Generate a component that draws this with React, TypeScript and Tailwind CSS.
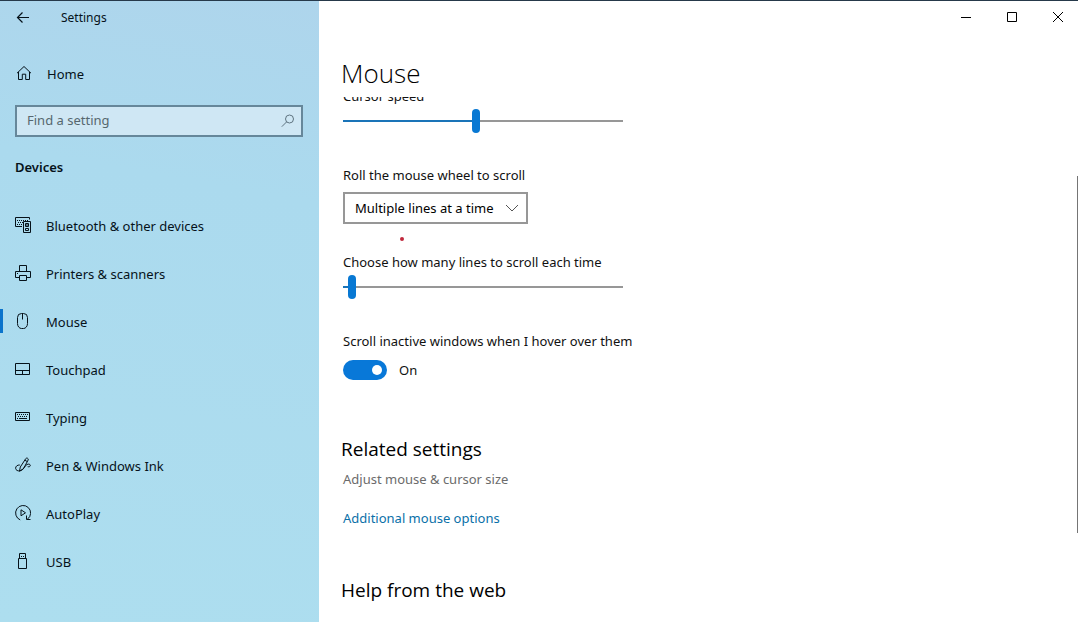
import { useState } from "react";
import type { CSSProperties, ReactNode } from "react";

const ICONS: Record<string, ReactNode> = {
  home: <path d="M1 8.2 8 1.5l7 6.7M2.5 7v7.5h3.8V9.2h3.4v5.3h3.8V7" />,
  bluetooth: (
    <>
      <path d="M7 9.5H.5v-9h14v2" />
      <path d="M2 3.5h11M3 5.5h5M2 7.5h5" strokeDasharray="1 1" />
      <path d="M8.5 4.5h7v11h-7zM10.5 6.5h3v3h-3zM11 8h2M10.5 11.5h3v2h-3z" />
    </>
  ),
  printer: (
    <path d="M4.5 6.5v-6h7v6M4.5 12.5h-4v-6h15v6h-4M4.5 10.5h7v5h-7zM2 8.5h1" />
  ),
  mouse: (
    <path d="M2.5 4.5a4 4 0 0 1 4-4h2a4 4 0 0 1 4 4v6a4 5 0 0 1-4 5h-2a4 5 0 0 1-4-5zM7.5.5v6" />
  ),
  touchpad: <path d="M.5 2.5h14v11H.5zM.5 9.5h14M7.5 9.5v4" />,
  typing: (
    <>
      <path d="M.5 3.5h14v8H.5z" />
      <path d="M2 5.5h11M3 7.5h10M2 9.5h2M11 9.5h2" strokeDasharray="1 1" />
      <path d="M4 9.5h7" />
    </>
  ),
  pen: (
    <path d="M4.5 14.2 5.3 10l5.500-8.400c.8-1.200 3-.2 2.400 1.300L8.400 11.800zM9.800 3.200l2.500 1.400M4.800 8C2.500 7.800.5 9.300.6 11.300c.1 2 2.400 2.900 4.400 2.600 3.500-.5 4.500-5.200 7-6.400 1.700-.8 3.300-.3 3.300 1 0 1-1.100 1.500-2.600 1.200" />
  ),
  autoplay: (
    <>
      <path d="M5.200 14.900A7.500 7.500 0 1 1 12.600 14M15.500 14.500h-4v-4" />
      <path d="M6 4.800v6l4.500-3z" />
    </>
  ),
  usb: <path d="M4.5 5.500v-5h6v5M3.500 5.500h8v10h-8zM6 3.500h1M8 3.500h1" />,
};

const NAV_ITEMS = [
  { icon: "bluetooth", label: "Bluetooth & other devices" },
  { icon: "printer", label: "Printers & scanners" },
  { icon: "mouse", label: "Mouse" },
  { icon: "touchpad", label: "Touchpad" },
  { icon: "typing", label: "Typing" },
  { icon: "pen", label: "Pen & Windows Ink" },
  { icon: "autoplay", label: "AutoPlay" },
  { icon: "usb", label: "USB" },
];

const WINDOW_BUTTONS = [
  { label: "Minimize", path: "M1 6.5h10" },
  { label: "Maximize", path: "M1.5 1.5h9v9h-9z" },
  { label: "Close", path: "m1 1 10 10M11 1 1 11" },
];

function Icon({ name }: { name: string }) {
  return (
    <svg
      viewBox="0 0 16 16"
      className="-mt-0.5 size-4 shrink-0 fill-none stroke-current"
      aria-hidden="true"
    >
      {ICONS[name]}
    </svg>
  );
}

type SliderProps = {
  id: string;
  label: string;
  min: number;
  max: number;
  initial: number;
};

function Slider({ id, label, min, max, initial }: SliderProps) {
  const [value, setValue] = useState(initial);
  const fill = ((value - min) / (max - min)) * 100;

  return (
    <div className="flex flex-col gap-[3px]">
      <label htmlFor={id}>{label}</label>
      <input
        id={id}
        type="range"
        min={min}
        max={max}
        value={value}
        onChange={(e) => setValue(Number(e.target.value))}
        style={{ "--fill": `${fill}%` } as CSSProperties}
        className="h-6 w-full max-w-[280px] appearance-none bg-transparent [&::-webkit-slider-runnable-track]:h-0.5 [&::-webkit-slider-runnable-track]:bg-[linear-gradient(to_right,#1a74b8_var(--fill),#979797_var(--fill))] [&::-webkit-slider-thumb]:-mt-[11px] [&::-webkit-slider-thumb]:h-6 [&::-webkit-slider-thumb]:w-2 [&::-webkit-slider-thumb]:appearance-none [&::-webkit-slider-thumb]:rounded-full [&::-webkit-slider-thumb]:bg-[#0878d3]"
      />
    </div>
  );
}

function Sidebar() {
  return (
    <aside className="w-[319px] shrink-0 bg-linear-[190deg] from-[#aed5ec] via-[#abdaee] via-30% to-[#addeef] text-[#06121a]">
      <header className="flex h-[33px] items-center gap-[31px] pl-4 text-xs">
        <button type="button" aria-label="Back">
          <svg
            viewBox="0 0 14 14"
            className="size-3.5 fill-none stroke-current"
            aria-hidden="true"
          >
            <path d="M13 6.5H1.5M6.5 1.5l-5 5 5 5" strokeWidth="1.2" />
          </svg>
        </button>
        <span>Settings</span>
      </header>

      <a href="#home" className="mt-4 flex h-12 items-center gap-[15px] px-4">
        <Icon name="home" />
        Home
      </a>

      {/* Search */}
      <div className="mt-[7px] mr-4 ml-[15px] flex h-8 items-center border-2 border-[#66879a] bg-[#cfe7f4] pr-1.5">
        <input
          type="text"
          aria-label="Find a setting"
          placeholder="Find a setting"
          className="h-full min-w-0 flex-1 bg-transparent px-2.5 pb-0.5 outline-none placeholder:text-[#56676f]"
        />
        <svg
          viewBox="0 0 14 14"
          className="size-3.5 fill-none stroke-[#5f7480]"
          aria-hidden="true"
        >
          <circle cx="8.5" cy="5" r="4" />
          <path d="M5.700 7.800.8 12.700" />
        </svg>
      </div>

      <h2 className="mt-2.5 px-[15px] leading-10 font-semibold">Devices</h2>

      <nav className="mt-[15px]">
        {NAV_ITEMS.map(({ icon, label }) => (
          <a
            key={icon}
            href={`#${icon}`}
            aria-current={icon === "mouse" ? "page" : undefined}
            className="group flex h-12 items-center"
          >
            <span className="-mt-0.5 h-6 w-[3px] group-aria-[current=page]:bg-[#0b74cc]" />
            <span className="flex items-center gap-[15px] pl-3">
              <Icon name={icon} />
              {label}
            </span>
          </a>
        ))}
      </nav>
    </aside>
  );
}

function WindowControls() {
  return (
    <div className="flex h-8 justify-end gap-1.5">
      {WINDOW_BUTTONS.map(({ label, path }) => (
        <button
          key={label}
          type="button"
          aria-label={label}
          className="grid w-10 place-items-center"
        >
          <svg
            viewBox="0 0 12 12"
            className="size-3 fill-none stroke-black"
            aria-hidden="true"
          >
            <path d={path} />
          </svg>
        </button>
      ))}
    </div>
  );
}

export default function App() {
  const [inactive, setInactive] = useState(true);

  return (
    <div className="flex h-screen overflow-hidden border-t border-[#26394a] bg-white font-['Noto_Sans','Open_Sans',sans-serif] text-[13px] leading-5 text-[#111]">
      <Sidebar />

      <main className="flex min-w-0 flex-1 flex-col">
        <WindowControls />
        <h1 className="mt-[22px] pl-[22px] font-['Open_Sans','Noto_Sans',sans-serif] text-[26px] leading-9 font-light text-black">
          Mouse
        </h1>

        <div className="relative mt-1.5 min-h-0 flex-1 overflow-hidden pl-6">
          <div className="-mt-[11px]">
            <Slider
              id="cursor-speed"
              label="Cursor speed"
              min={1}
              max={20}
              initial={10}
            />
          </div>

          <div className="relative mt-8 flex flex-col items-start gap-[7px]">
            <label htmlFor="wheel">Roll the mouse wheel to scroll</label>
            <div className="relative">
              <select
                id="wheel"
                className="h-8 w-[185px] appearance-none border-2 border-[#979797] bg-white pl-2.5 text-black"
              >
                <option>Multiple lines at a time</option>
                <option>One screen at a time</option>
              </select>
              <svg
                viewBox="0 0 14 8"
                className="pointer-events-none absolute top-3 right-[9px] h-2 w-3.5 fill-none stroke-[#555]"
                aria-hidden="true"
              >
                <path d="m1 1 6 6 6-6" />
              </svg>
            </div>
            <span className="absolute top-[72px] left-[57px] size-1 rounded-full bg-[#c0283c]" />
          </div>

          <div className="mt-7">
            <Slider
              id="lines"
              label="Choose how many lines to scroll each time"
              min={1}
              max={100}
              initial={3}
            />
          </div>

          <div className="mt-8 flex flex-col gap-[9px]">
            <label htmlFor="inactive">
              Scroll inactive windows when I hover over them
            </label>
            <div className="flex items-center gap-3">
              <input
                id="inactive"
                type="checkbox"
                role="switch"
                checked={inactive}
                onChange={(e) => setInactive(e.target.checked)}
                className="flex h-5 w-11 appearance-none items-center rounded-full bg-[#777] px-[5px] before:size-2.5 before:rounded-full before:bg-white checked:justify-end checked:bg-[#0878d8]"
              />
              <span>{inactive ? "On" : "Off"}</span>
            </div>
          </div>

          <section className="mt-[55px] flex flex-col items-start">
            <h2 className="-ml-0.5 font-['Open_Sans','Noto_Sans',sans-serif] text-[19px] leading-7 text-black">
              Related settings
            </h2>
            <a href="#cursor-size" className="mt-1.5 text-[#6b6b6b]">
              Adjust mouse &amp; cursor size
            </a>
            <a href="#mouse-options" className="mt-[19px] text-[#0a70a8]">
              Additional mouse options
            </a>
          </section>

          <section className="mt-12">
            <h2 className="-ml-0.5 font-['Open_Sans','Noto_Sans',sans-serif] text-[19px] leading-7 text-black">
              Help from the web
            </h2>
          </section>

          {/* Collapsed scrollbar thumb */}
          <div className="absolute top-[15%] right-0 h-[68%] w-px bg-[#757575]" />
        </div>
      </main>
    </div>
  );
}
